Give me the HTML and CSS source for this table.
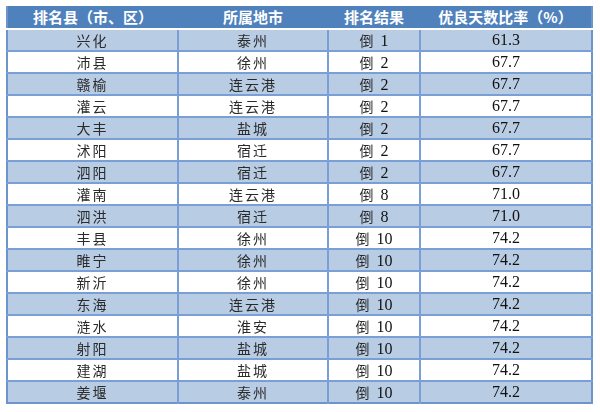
FILE: index.html
```html
<!DOCTYPE html>
<html>
<head>
<meta charset="utf-8">
<link rel="stylesheet" href="styles.css">
</head>
<body>
<table class="rank">
  <thead>
    <tr><th>排名县（市、区）</th><th>所属地市</th><th>排名结果</th><th>优良天数比率（%）</th></tr>
  </thead>
  <tbody>
    <tr><td>兴化</td><td>泰州</td><td>倒 <span class="n">1</span></td><td class="n">61.3</td></tr>
    <tr><td>沛县</td><td>徐州</td><td>倒 <span class="n">2</span></td><td class="n">67.7</td></tr>
    <tr><td>赣榆</td><td>连云港</td><td>倒 <span class="n">2</span></td><td class="n">67.7</td></tr>
    <tr><td>灌云</td><td>连云港</td><td>倒 <span class="n">2</span></td><td class="n">67.7</td></tr>
    <tr><td>大丰</td><td>盐城</td><td>倒 <span class="n">2</span></td><td class="n">67.7</td></tr>
    <tr><td>沭阳</td><td>宿迁</td><td>倒 <span class="n">2</span></td><td class="n">67.7</td></tr>
    <tr><td>泗阳</td><td>宿迁</td><td>倒 <span class="n">2</span></td><td class="n">67.7</td></tr>
    <tr><td>灌南</td><td>连云港</td><td>倒 <span class="n">8</span></td><td class="n">71.0</td></tr>
    <tr><td>泗洪</td><td>宿迁</td><td>倒 <span class="n">8</span></td><td class="n">71.0</td></tr>
    <tr><td>丰县</td><td>徐州</td><td>倒 <span class="n">10</span></td><td class="n">74.2</td></tr>
    <tr><td>睢宁</td><td>徐州</td><td>倒 <span class="n">10</span></td><td class="n">74.2</td></tr>
    <tr><td>新沂</td><td>徐州</td><td>倒 <span class="n">10</span></td><td class="n">74.2</td></tr>
    <tr><td>东海</td><td>连云港</td><td>倒 <span class="n">10</span></td><td class="n">74.2</td></tr>
    <tr><td>涟水</td><td>淮安</td><td>倒 <span class="n">10</span></td><td class="n">74.2</td></tr>
    <tr><td>射阳</td><td>盐城</td><td>倒 <span class="n">10</span></td><td class="n">74.2</td></tr>
    <tr><td>建湖</td><td>盐城</td><td>倒 <span class="n">10</span></td><td class="n">74.2</td></tr>
    <tr><td>姜堰</td><td>泰州</td><td>倒 <span class="n">10</span></td><td class="n">74.2</td></tr>
  </tbody>
</table>
</body>
</html>
```
FILE: styles.css
```css
html, body {
  margin: 0;
  padding: 0;
  background: #ffffff;
}
body {
  padding: 6px 0 0 6px;
  font-family: "Liberation Serif", "Noto Sans CJK SC", serif;
  -webkit-font-smoothing: antialiased;
}
.rank {
  border-collapse: collapse;
  table-layout: fixed;
  width: 587px;
  border-left: 2px solid #6f94cc;
  border-right: 2px solid #6f94cc;
  border-bottom: 2px solid #6f94cc;
  transform: translateZ(0);
}
.rank th:nth-child(1), .rank td:nth-child(1) { width: 170px; }
.rank th:nth-child(2), .rank td:nth-child(2) { width: 150px; }
.rank th:nth-child(3), .rank td:nth-child(3) { width: 92px; }
.rank thead th {
  background: #4f81bd;
  color: #ffffff;
  font-family: "Noto Sans CJK SC", sans-serif;
  font-weight: 700;
  font-size: 15px;
  height: 22px;
  padding: 0;
  line-height: 16px;
  border-bottom: 2px solid #ffffff;
  text-align: center;
}
.rank tbody tr { height: 22px; }
.rank td {
  height: 20px;
  padding: 0;
  line-height: 16px;
  text-align: center;
  vertical-align: middle;
  font-family: "Noto Sans CJK SC", sans-serif;
  font-weight: 400;
  font-size: 14px;
  color: #2a2a2a;
  letter-spacing: 2px;
  border-top: 2px solid #7a9fd6;
  border-left: 2px solid #7a9fd6;
  overflow: hidden;
}
.rank td:first-child { border-left: none; }
.rank tbody tr:first-child td { border-top: none; }
.rank tbody tr:nth-child(odd) td { background: #b8cce4; }
.rank tbody tr:nth-child(even) td { background: #ffffff; }
.rank .n {
  font-family: "Liberation Serif", serif;
  font-weight: 400;
  font-size: 16px;
  line-height: 16px;
  color: #111111;
  letter-spacing: 0;
}
```
